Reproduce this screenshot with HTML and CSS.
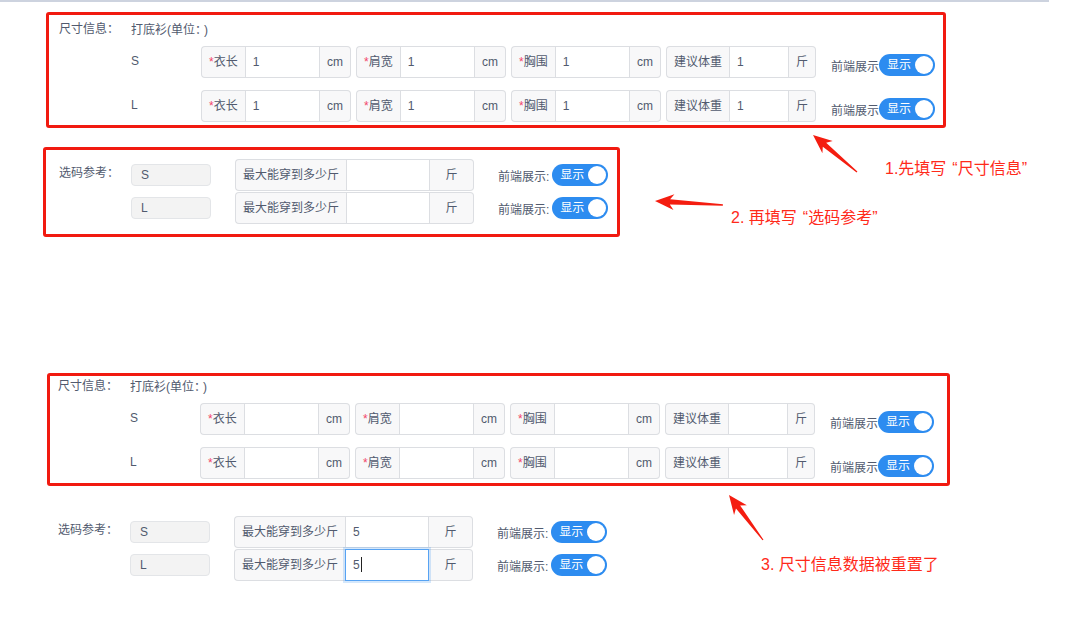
FILE: index.html
```html
<!DOCTYPE html>
<html>
<head>
    <meta charset="utf-8">
    <title>尺寸信息</title>
    <link rel="stylesheet" href="styles.css">
</head>
<body>
<div class="page">
    <div class="topbar"></div>

    <!-- 尺寸信息 (filled) -->
    <section class="panel panel--red panel--size">
        <div class="panel-label">尺寸信息：</div>
        <div class="panel-body">
            <div class="panel-title">打底衫(单位<span class="colon">：</span>)</div>
            <div class="size-row">
                <div class="size-name">S</div>
                <div class="groups">
                    <div class="group"><span class="addon addon--pre"><i class="req">*</i>衣长</span><span class="field">1</span><span class="addon addon--post">cm</span></div>
                    <div class="group"><span class="addon addon--pre"><i class="req">*</i>肩宽</span><span class="field">1</span><span class="addon addon--post">cm</span></div>
                    <div class="group"><span class="addon addon--pre"><i class="req">*</i>胸围</span><span class="field">1</span><span class="addon addon--post">cm</span></div>
                    <div class="group"><span class="addon addon--pre">建议体重</span><span class="field">1</span><span class="addon addon--post">斤</span></div>
                </div>
                <div class="show"><span class="show-label">前端展示</span><span class="switch"><span class="switch-text">显示</span></span></div>
            </div>
            <div class="size-row">
                <div class="size-name">L</div>
                <div class="groups">
                    <div class="group"><span class="addon addon--pre"><i class="req">*</i>衣长</span><span class="field">1</span><span class="addon addon--post">cm</span></div>
                    <div class="group"><span class="addon addon--pre"><i class="req">*</i>肩宽</span><span class="field">1</span><span class="addon addon--post">cm</span></div>
                    <div class="group"><span class="addon addon--pre"><i class="req">*</i>胸围</span><span class="field">1</span><span class="addon addon--post">cm</span></div>
                    <div class="group"><span class="addon addon--pre">建议体重</span><span class="field">1</span><span class="addon addon--post">斤</span></div>
                </div>
                <div class="show"><span class="show-label">前端展示</span><span class="switch"><span class="switch-text">显示</span></span></div>
            </div>
        </div>
    </section>

    <!-- 选码参考 -->
    <section class="panel panel--red panel--pick">
        <div class="panel-label panel-label--pick">选码参考：</div>
        <div class="panel-body">
            <div class="pick-row">
                <div class="pick-size">S</div>
                <div class="group group--weight"><span class="addon addon--pre">最大能穿到多少斤</span><span class="field"></span><span class="addon addon--post addon--wide">斤</span></div>
                <div class="show show--pick"><span class="show-label">前端展示:</span><span class="switch"><span class="switch-text">显示</span></span></div>
            </div>
            <div class="pick-row">
                <div class="pick-size">L</div>
                <div class="group group--weight"><span class="addon addon--pre">最大能穿到多少斤</span><span class="field"></span><span class="addon addon--post addon--wide">斤</span></div>
                <div class="show show--pick"><span class="show-label">前端展示:</span><span class="switch"><span class="switch-text">显示</span></span></div>
            </div>
        </div>
    </section>

    <!-- 尺寸信息 (reset) -->
    <section class="panel panel--red panel--size panel--reset">
        <div class="panel-label">尺寸信息：</div>
        <div class="panel-body">
            <div class="panel-title">打底衫(单位<span class="colon">：</span>)</div>
            <div class="size-row">
                <div class="size-name">S</div>
                <div class="groups">
                    <div class="group"><span class="addon addon--pre"><i class="req">*</i>衣长</span><span class="field"></span><span class="addon addon--post">cm</span></div>
                    <div class="group"><span class="addon addon--pre"><i class="req">*</i>肩宽</span><span class="field"></span><span class="addon addon--post">cm</span></div>
                    <div class="group"><span class="addon addon--pre"><i class="req">*</i>胸围</span><span class="field"></span><span class="addon addon--post">cm</span></div>
                    <div class="group"><span class="addon addon--pre">建议体重</span><span class="field"></span><span class="addon addon--post">斤</span></div>
                </div>
                <div class="show"><span class="show-label">前端展示</span><span class="switch"><span class="switch-text">显示</span></span></div>
            </div>
            <div class="size-row">
                <div class="size-name">L</div>
                <div class="groups">
                    <div class="group"><span class="addon addon--pre"><i class="req">*</i>衣长</span><span class="field"></span><span class="addon addon--post">cm</span></div>
                    <div class="group"><span class="addon addon--pre"><i class="req">*</i>肩宽</span><span class="field"></span><span class="addon addon--post">cm</span></div>
                    <div class="group"><span class="addon addon--pre"><i class="req">*</i>胸围</span><span class="field"></span><span class="addon addon--post">cm</span></div>
                    <div class="group"><span class="addon addon--pre">建议体重</span><span class="field"></span><span class="addon addon--post">斤</span></div>
                </div>
                <div class="show"><span class="show-label">前端展示</span><span class="switch"><span class="switch-text">显示</span></span></div>
            </div>
        </div>
    </section>

    <!-- 选码参考 (after edit) -->
    <section class="panel panel--pick panel--plain">
        <div class="panel-label panel-label--pick">选码参考：</div>
        <div class="panel-body">
            <div class="pick-row">
                <div class="pick-size">S</div>
                <div class="group group--weight"><span class="addon addon--pre">最大能穿到多少斤</span><span class="field">5</span><span class="addon addon--post addon--wide">斤</span></div>
                <div class="show show--pick"><span class="show-label">前端展示:</span><span class="switch"><span class="switch-text">显示</span></span></div>
            </div>
            <div class="pick-row">
                <div class="pick-size">L</div>
                <div class="group group--weight"><span class="addon addon--pre">最大能穿到多少斤</span><span class="field is-focus">5<span class="caret"></span></span><span class="addon addon--post addon--wide">斤</span></div>
                <div class="show show--pick"><span class="show-label">前端展示:</span><span class="switch"><span class="switch-text">显示</span></span></div>
            </div>
        </div>
    </section>

    <!-- annotations -->
    <svg class="arrows" width="1073" height="639" viewBox="0 0 1073 639">
        <polygon transform="translate(813 135) rotate(40.06)" points="0,0 19,-8 15,-2.6 57.5,-0.6 57.5,0.6 15,2.6 19,8"/>
        <polygon transform="translate(655 201) rotate(3.37)" points="0,0 19,-8 15,-2.6 68,-0.7 68,0.7 15,2.6 19,8"/>
        <polygon transform="translate(729 495) rotate(52.93)" points="0,0 19,-8 15,-2.6 56.4,-0.6 56.4,0.6 15,2.6 19,8"/>
    </svg>
    <p class="note note--1">1.先填写<span class="q-open">“</span>尺寸信息<span class="q-close">”</span></p>
    <p class="note note--2">2. 再填写<span class="q-open">“</span>选码参考<span class="q-close">”</span></p>
    <p class="note note--3">3. 尺寸信息数据被重置了</p>
</div>
</body>
</html>
```

FILE: styles.css
```css
* {
    margin: 0;
    padding: 0;
    box-sizing: border-box;
}

body {
    background: #fff;
    font-family: 'Liberation Sans', 'Noto Sans CJK SC', sans-serif;
    font-size: 12px;
    color: #515a6e;
}

.page {
    position: relative;
    width: 1073px;
    height: 639px;
    overflow: hidden;
}

.topbar {
    width: 1049px;
    height: 2px;
    background: #cdd3df;
}

/* Panels */
.panel {
    display: grid;
    grid-template-columns: 72px auto;
    border: 3px solid transparent;
    border-radius: 3px;
}

.panel--red {
    border-color: #f11a10;
}

.panel--size {
    width: 900px;
    margin: 10px 0 0 46px;
    padding: 4px 0 3px 10px;
}

.panel--reset {
    width: 903px;
    margin: 136px 0 0 47px;
    padding: 0 0 4px 8px;
}

.panel--pick {
    width: 577px;
    margin: 19px 0 0 43px;
    padding: 9px 0 10px 13px;
}

.panel--plain {
    margin: 18px 0 0 42px;
}

.panel-label {
    line-height: 20px;
    white-space: nowrap;
}

.panel-label--pick {
    line-height: 28px;
}

.panel-title {
    height: 20px;
    line-height: 20px;
    margin-bottom: 7px;
    overflow: hidden;
}

.colon {
    font-family: 'Noto Sans CJK SC', sans-serif;
    padding-right: 3px;
}

/* Size rows */
.size-row {
    display: flex;
    align-items: flex-start;
    height: 32px;
    margin-bottom: 12px;
}

.size-row:last-child {
    margin-bottom: 0;
}

.size-name {
    width: 70px;
    line-height: 30px;
}

.groups {
    display: flex;
    gap: 5px;
}

/* Input group */
.group {
    display: flex;
    width: 150px;
    height: 32px;
}

.addon {
    background: #f8f8f9;
    border: 1px solid #dcdee2;
    padding: 0 7px;
    line-height: 30px;
    white-space: nowrap;
}

.addon--pre {
    border-right: 0;
    border-radius: 4px 0 0 4px;
}

.addon--post {
    border-left: 0;
    border-radius: 0 4px 4px 0;
}

.addon--wide {
    width: 44px;
    padding: 0;
    text-align: center;
}

.req {
    font-style: normal;
    color: #f2466a;
}

.field {
    flex: 1;
    border: 1px solid #dcdee2;
    background: #fff;
    padding: 0 7px;
    line-height: 30px;
    color: #515a6e;
    font-size: 12px;
}

.field.is-focus {
    position: relative;
    z-index: 1;
    border-color: #57a3f3;
    box-shadow: 0 0 0 2px rgba(45, 140, 240, 0.2);
}

.caret {
    display: inline-block;
    width: 1px;
    height: 15px;
    margin-left: 1px;
    background: #222;
    vertical-align: -3px;
}

/* Show switch */
.show {
    display: flex;
    align-items: center;
    height: 22px;
    margin: 8px 0 0 15px;
}

.show--pick {
    margin: 0 0 0 24px;
}

.show-label {
    white-space: nowrap;
}

.show--pick .switch {
    margin-left: 3px;
}

.switch {
    position: relative;
    width: 56px;
    height: 22px;
    border-radius: 11px;
    background: #2d8cf0;
    flex-shrink: 0;
}

.switch::after {
    content: '';
    position: absolute;
    top: 2px;
    right: 2px;
    width: 18px;
    height: 18px;
    border-radius: 50%;
    background: #fff;
}

.switch-text {
    display: block;
    padding-left: 8px;
    line-height: 22px;
    color: #fff;
    font-size: 12px;
}

/* Pick rows */
.pick-row {
    display: flex;
    align-items: center;
    height: 32px;
    margin-bottom: 1px;
}

.pick-row:last-child {
    margin-bottom: 0;
}

.pick-size {
    width: 80px;
    height: 22px;
    margin-right: 24px;
    padding-left: 9px;
    background: #f3f3f3;
    border: 1px solid #e3e5e8;
    border-radius: 4px;
    line-height: 20px;
}

.group--weight {
    width: 239px;
}

/* Annotations */
.arrows {
    position: absolute;
    top: 0;
    left: 0;
    pointer-events: none;
}

.arrows polygon {
    fill: #f41d10;
}

.note {
    position: absolute;
    font-size: 16px;
    line-height: 20px;
    color: #ff2a1a;
    white-space: nowrap;
}

.note .q-open {
    padding-left: 6px;
}

.note .q-close {
    padding-right: 6px;
}

.note--1 {
    left: 885px;
    top: 159px;
}

.note--2 {
    left: 731px;
    top: 208px;
}

.note--3 {
    left: 761px;
    top: 555px;
}
```
